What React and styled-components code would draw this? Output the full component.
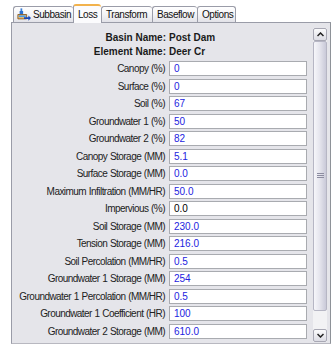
import React from "react";
import styled, { createGlobalStyle } from "styled-components";

const GlobalStyle = createGlobalStyle`
  html, body {
    margin: 0;
    padding: 0;
    background: #ffffff;
    font-family: "Liberation Sans", Arial, sans-serif;
  }
`;

const Window = styled.div`
  width: 335px;
  height: 346px;
  background: #ffffff;
  padding-left: 11px;
  box-sizing: border-box;
`;

const TabBar = styled.div`
  display: flex;
  align-items: flex-end;
  height: 22px;
  padding-left: 2px;
`;

const Tab = styled.div`
  display: flex;
  align-items: center;
  gap: 2px;
  box-sizing: border-box;
  width: ${(p) => p.$w}px;
  height: ${(p) => (p.$active ? 19 : 16)}px;
  padding: 0 0 0 ${(p) => p.$pad || 4}px;
  font-size: 10px;
  letter-spacing: -0.45px;
  color: #111;
  white-space: nowrap;
  overflow: hidden;
  border: 1px solid #9a9ca8;
  border-bottom: none;
  border-right: ${(p) => (p.$last ? "1px solid #9a9ca8" : "none")};
  border-radius: 3px 3px 0 0;
  background: ${(p) =>
    p.$active
      ? "#fbfbfd"
      : "linear-gradient(#ffffff 0%, #f4f4f6 50%, #e2e2e8 100%)"};
  border-top: ${(p) => (p.$active ? "2px solid #f2b24c" : "1px solid #9a9ca8")};
  position: relative;
  margin-bottom: ${(p) => (p.$active ? -1 : 0)}px;
  z-index: ${(p) => (p.$active ? 2 : 1)};
`;

const Panel = styled.div`
  display: flex;
  height: 322px;
  box-sizing: border-box;
  width: 320px;
  background: #e5e5ea;
  border-left: 1px solid #9a9ca8;
  border-right: 1px solid #8e9298;
  border-top: 1px solid #9a9ca8;
  border-bottom: 1px solid #b8b8c0;
`;

const Content = styled.div`
  display: flex;
  flex-direction: column;
  padding-top: 8px;
`;

const HeaderLine = styled.div`
  display: grid;
  grid-template-columns: 154px auto;
  column-gap: 3px;
  height: 14px;
  line-height: 14px;
  font-size: 10px;
  font-weight: bold;
  color: #1a1a1a;
`;

const HeaderLabel = styled.span`
  text-align: right;
`;

const Rows = styled.div`
  display: grid;
  grid-template-columns: 153px 138px;
  column-gap: 4px;
  row-gap: 2.5px;
  margin-top: 2px;
`;

const Label = styled.div`
  height: 15px;
  line-height: 15px;
  text-align: right;
  font-size: 10px;
  letter-spacing: -0.55px;
  word-spacing: 0.5px;
  color: #222;
  white-space: nowrap;
`;

const Field = styled.div`
  height: 15px;
  box-sizing: border-box;
  line-height: 13px;
  padding-left: 4px;
  background: #ffffff;
  border: 1px solid #a9abb0;
  font-size: 10px;
  color: ${(p) => (p.$plain ? "#000000" : "#2323e0")};
`;

const ScrollBar = styled.div`
  display: flex;
  flex-direction: column;
  width: 14px;
  margin: 5px 0 0 6px;
  height: 314px;
  background: #f2f2f4;
`;

const ScrollButton = styled.div`
  height: 13px;
  box-sizing: border-box;
  border: 1px solid #a8a8b4;
  border-radius: 2px;
  background: linear-gradient(#fbfbfc, #dcdce4);
  display: flex;
  align-items: center;
  justify-content: center;
`;

const Thumb = styled.div`
  flex: 0 0 270px;
  box-sizing: border-box;
  border: 1px solid #b6b6c4;
  border-radius: 2px;
  background: linear-gradient(90deg, #f6f6fa 0%, #e6e6ee 45%, #c9c9d8 100%);
  display: flex;
  align-items: center;
  justify-content: center;
`;

const Track = styled.div`
  flex: 1;
`;

const Chevron = ({ down }) => (
  <svg width="7" height="5" viewBox="0 0 7 5">
    <path
      d={down ? "M0.5 1 L3.5 4 L6.5 1" : "M0.5 4 L3.5 1 L6.5 4"}
      fill="none"
      stroke="#222"
      strokeWidth="1.5"
    />
  </svg>
);

const Grip = () => (
  <svg width="7" height="6" viewBox="0 0 7 6">
    <path d="M0 0.5 H7 M0 2.5 H7 M0 4.5 H7" stroke="#8c8ca0" strokeWidth="1" />
  </svg>
);

const SubbasinIcon = () => (
  <svg width="14" height="13" viewBox="0 0 16 14" style={{ flex: "none" }}>
    <rect x="4" y="0" width="2" height="3" fill="#3b7fd6" />
    <rect x="3" y="3" width="4" height="4" fill="#2a6fd0" />
    <path d="M1 7 H11 V12 H1 Z" fill="#f0c070" stroke="#8a5a20" strokeWidth="1" />
    <rect x="2" y="8" width="8" height="2" fill="#4b9be8" />
    <path d="M8 10 H13 V8 L16 11 L13 14 V12 H8 Z" fill="#1848b8" />
  </svg>
);

const tabs = [
  { name: "Subbasin", w: 60, icon: true, pad: 3 },
  { name: "Loss", w: 28, active: true },
  { name: "Transform", w: 51 },
  { name: "Baseflow", w: 45 },
  { name: "Options", w: 39, last: true },
];

const rows = [
  ["Canopy (%)", "0"],
  ["Surface (%)", "0"],
  ["Soil (%)", "67"],
  ["Groundwater 1 (%)", "50"],
  ["Groundwater 2 (%)", "82"],
  ["Canopy Storage (MM)", "5.1"],
  ["Surface Storage (MM)", "0.0"],
  ["Maximum Infiltration (MM/HR)", "50.0"],
  ["Impervious (%)", "0.0", true],
  ["Soil Storage (MM)", "230.0"],
  ["Tension Storage (MM)", "216.0"],
  ["Soil Percolation (MM/HR)", "0.5"],
  ["Groundwater 1 Storage (MM)", "254"],
  ["Groundwater 1 Percolation (MM/HR)", "0.5"],
  ["Groundwater 1 Coefficient (HR)", "100"],
  ["Groundwater 2 Storage (MM)", "610.0"],
];

export default function App() {
  return (
    <Window>
      <GlobalStyle />
      <TabBar>
        {tabs.map((t) => (
          <Tab
            key={t.name}
            $w={t.w}
            $active={t.active}
            $last={t.last}
            $pad={t.pad}
          >
            {t.icon && <SubbasinIcon />}
            {t.name}
          </Tab>
        ))}
      </TabBar>
      <Panel>
        <Content>
          <HeaderLine>
            <HeaderLabel>Basin Name:</HeaderLabel>
            <span>Post Dam</span>
          </HeaderLine>
          <HeaderLine>
            <HeaderLabel>Element Name:</HeaderLabel>
            <span>Deer Cr</span>
          </HeaderLine>
          <Rows>
            {rows.map(([label, value, plain]) => (
              <React.Fragment key={label}>
                <Label>{label}</Label>
                <Field $plain={plain}>{value}</Field>
              </React.Fragment>
            ))}
          </Rows>
        </Content>
        <ScrollBar>
          <ScrollButton>
            <Chevron />
          </ScrollButton>
          <Thumb>
            <Grip />
          </Thumb>
          <Track />
          <ScrollButton>
            <Chevron down />
          </ScrollButton>
        </ScrollBar>
      </Panel>
    </Window>
  );
}
